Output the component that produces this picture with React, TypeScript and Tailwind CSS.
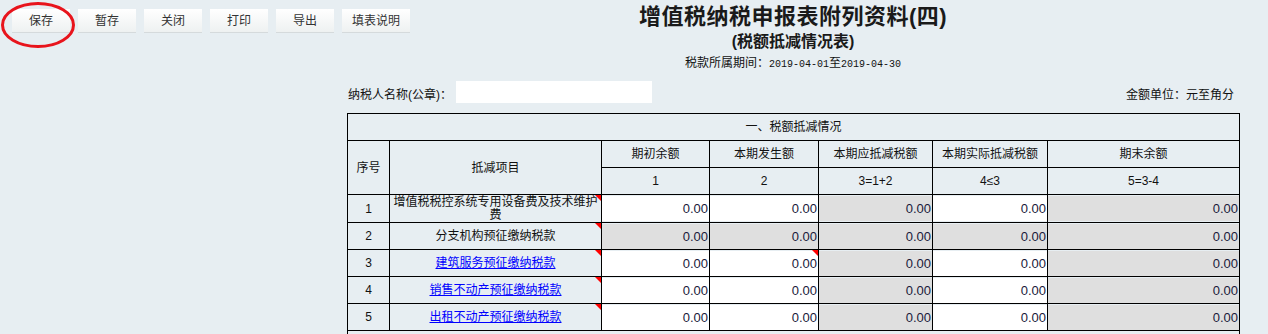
import type { ReactNode } from "react";

const FONT = { fontFamily: '"Liberation Sans", "Noto Sans CJK SC", sans-serif' };
const MONO = { fontFamily: '"Liberation Mono", "Noto Sans CJK SC", monospace' };

const BUTTONS = [
  { label: "保存", w: "w-[58px]" },
  { label: "暂存", w: "w-[58px]" },
  { label: "关闭", w: "w-[58px]" },
  { label: "打印", w: "w-[58px]" },
  { label: "导出", w: "w-[58px]" },
  { label: "填表说明", w: "w-[68px]" },
];

type Kind = "in" | "ro";

const ROWS: { no: string; item: string; link?: boolean; cells: Kind[]; tall?: boolean; flag2?: boolean }[] = [
  { no: "1", item: "增值税税控系统专用设备费及技术维护费", cells: ["in", "in", "ro", "in", "ro"], tall: true },
  { no: "2", item: "分支机构预征缴纳税款", cells: ["ro", "ro", "ro", "ro", "ro"] },
  { no: "3", item: "建筑服务预征缴纳税款", link: true, cells: ["in", "in", "ro", "in", "ro"], flag2: true },
  { no: "4", item: "销售不动产预征缴纳税款", link: true, cells: ["in", "in", "ro", "in", "ro"] },
  { no: "5", item: "出租不动产预征缴纳税款", link: true, cells: ["in", "in", "ro", "in", "ro"] },
];

function Flag() {
  return (
    <span className="absolute right-0 top-0 h-[6px] w-[6px] bg-[#ff0000] [clip-path:polygon(0_0,100%_0,100%_100%)]" />
  );
}

function Th({ children, rowSpan, colSpan }: { children: ReactNode; rowSpan?: number; colSpan?: number }) {
  return (
    <td
      rowSpan={rowSpan}
      colSpan={colSpan}
      className="h-[27px] border border-black p-0 text-center align-middle text-[12px] text-[#111]"
    >
      {children}
    </td>
  );
}

function Amount({ kind, flag, tall }: { kind: Kind; flag?: boolean; tall?: boolean }) {
  return (
    <td className={`relative border border-black p-0 align-top ${tall ? "h-[28px]" : "h-[27px]"}`}>
      <div
        className={`mt-[1px] h-[25px] pr-[1px] text-right text-[13px] leading-[25px] text-[#1a1a3a] ${
          kind === "in" ? "bg-white" : "bg-[#dfdfdf]"
        }`}
      >
        0.00
      </div>
      {flag && <Flag />}
    </td>
  );
}

export default function App() {
  return (
    <div style={FONT} className="relative min-h-screen w-full bg-[#e7eef2] text-[#111]">
      {/* floating toolbar */}
      <div className="absolute left-[12px] top-[9px] z-10 flex gap-[8px]">
        {BUTTONS.map((b) => (
          <button
            key={b.label}
            className={`${b.w} h-[24px] border-b border-[#d5dadc] bg-gradient-to-b from-[#ffffff] to-[#eef1f1] text-[12px] text-[#333]`}
          >
            {b.label}
          </button>
        ))}
      </div>
      {/* annotation ring */}
      <svg className="pointer-events-none absolute left-0 top-0 z-20" width="80" height="52">
        <ellipse cx="38" cy="25" rx="35.5" ry="21.5" fill="none" stroke="#e8141c" strokeWidth="3" />
      </svg>

      <div className="ml-[347px] w-[892px] pt-[3px]">
        <div className="h-[28px] text-center text-[22px] font-bold leading-[28px] tracking-[0.5px] text-[#1a1a1a]">
          增值税纳税申报表附列资料(四)
        </div>
        <div className="mt-[1px] h-[20px] text-center text-[16px] font-bold leading-[20px] text-[#1a1a1a]">
          (税额抵减情况表)
        </div>
        <div className="mt-[3px] flex h-[16px] items-baseline justify-center overflow-hidden text-[12px] leading-[16px]">
          <span>税款所属期间：</span>
          <span style={MONO} className="text-[10px]">2019-04-01</span>
          <span>至</span>
          <span style={MONO} className="text-[10px]">2019-04-30</span>
        </div>

        <div className="mt-[10px] flex h-[22px] items-center justify-between">
          <div className="flex h-[22px] items-center">
            <span className="pl-[1px] pt-[5px] text-[12px] leading-[14px]">纳税人名称(公章)：</span>
            <div className="ml-[4px] h-[22px] w-[196px] bg-white" />
          </div>
          <span className="pr-[5px] pt-[5px] text-[12px] leading-[14px]">金额单位：元至角分</span>
        </div>

        <table className="mt-[10px] w-[892px] table-fixed border-collapse">
          <colgroup>
            <col className="w-[42px]" />
            <col className="w-[212px]" />
            <col className="w-[108px]" />
            <col className="w-[109px]" />
            <col className="w-[114px]" />
            <col className="w-[115px]" />
            <col className="w-[192px]" />
          </colgroup>
          <tbody>
            <tr>
              <Th colSpan={7}>一、税额抵减情况</Th>
            </tr>
            <tr>
              <Th rowSpan={2}>序号</Th>
              <Th rowSpan={2}>抵减项目</Th>
              <Th>期初余额</Th>
              <Th>本期发生额</Th>
              <Th>本期应抵减税额</Th>
              <Th>本期实际抵减税额</Th>
              <Th>期末余额</Th>
            </tr>
            <tr>
              <Th>1</Th>
              <Th>2</Th>
              <Th>3=1+2</Th>
              <Th>4≤3</Th>
              <Th>5=3-4</Th>
            </tr>
            {ROWS.map((r) => (
              <tr key={r.no}>
                <td className="border border-black p-0 text-center text-[12px]">{r.no}</td>
                <td className="relative border border-black p-0 text-center text-[12px] leading-[13px]">
                  {r.link ? <a className="cursor-pointer text-[#0000ff] underline">{r.item}</a> : r.item}
                  <Flag />
                </td>
                {r.cells.map((c, i) => (
                  <Amount key={i} kind={c} tall={r.tall} flag={r.flag2 && i === 1} />
                ))}
              </tr>
            ))}
            <tr>
              <td colSpan={7} className="h-[27px] border border-black p-0" />
            </tr>
          </tbody>
        </table>
      </div>
    </div>
  );
}
